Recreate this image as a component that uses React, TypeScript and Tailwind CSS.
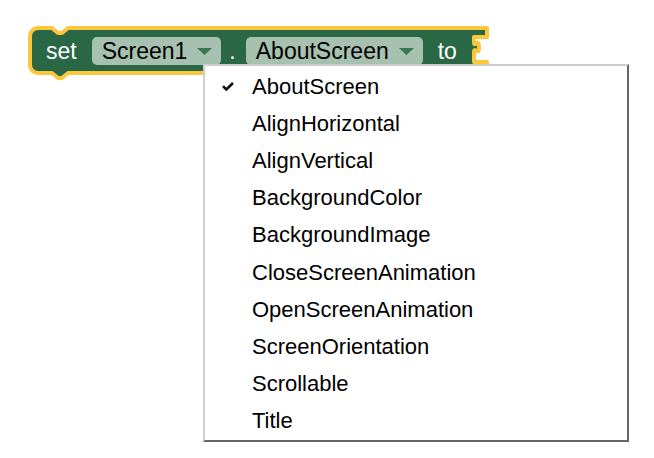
import React from 'react';

const FONT = { fontFamily: '"Liberation Sans", Arial, Helvetica, sans-serif' };

const properties = [
  'AboutScreen',
  'AlignHorizontal',
  'AlignVertical',
  'BackgroundColor',
  'BackgroundImage',
  'CloseScreenAnimation',
  'OpenScreenAnimation',
  'ScreenOrientation',
  'Scrollable',
  'Title',
];

function DropdownField({ label }: { label: string }) {
  return (
    <span className="inline-flex items-center h-[28px] rounded-[5px] bg-[#a7c1b0] pl-[10px] pr-[9px]">
      <span className="text-[23px] leading-none text-black">{label}</span>
      <svg width="15" height="7" viewBox="0 0 15 7" className="ml-[10px]">
        <path d="M0 0 H15 L7.5 7 Z" fill="#3a7552" />
      </svg>
    </span>
  );
}

// The block outline: rounded left side, statement notch top, tab bottom, empty value socket right
function BlockShape() {
  const d =
    'M2 10 A8 8 0 0 1 10 2 H24 l6 5 h4 l6 -5 H459 V11 H446 V16 ' +
    'c0 7 5 -5 5 5 s-5 -1 -5 5 V36 H459 V47 H40 l-6 5 h-4 l-6 -5 H10 A8 8 0 0 1 2 39 Z';
  return (
    <svg
      width="462"
      height="56"
      viewBox="0 0 462 56"
      className="absolute left-0 top-0 overflow-visible"
    >
      <path d={d} fill="#296745" stroke="#fcc63d" strokeWidth="4" strokeLinejoin="round" />
    </svg>
  );
}

function CheckMark() {
  return (
    <svg width="12" height="9" viewBox="0 0 12 9">
      <path d="M1 4.2 L4.3 7.5 L11 1" fill="none" stroke="#111" strokeWidth="2.6" />
    </svg>
  );
}

export default function App() {
  return (
    <div className="relative w-[654px] h-[458px] bg-white overflow-hidden" style={FONT}>
      {/* set Screen1.AboutScreen to */}
      <div className="relative ml-[28px] pt-[26px]">
        <div className="relative w-[462px] h-[56px]">
          <BlockShape />
          <div className="relative flex items-center h-[51px] pl-[18px] text-white">
            <span className="text-[23px] leading-none">set</span>
            <span className="ml-[15px]">
              <DropdownField label="Screen1" />
            </span>
            <span className="ml-[8px] text-[23px] leading-none">.</span>
            <span className="ml-[10px]">
              <DropdownField label="AboutScreen" />
            </span>
            <span className="ml-[15px] text-[23px] leading-none">to</span>
          </div>
        </div>
      </div>

      {/* Property dropdown menu */}
      <div className="absolute left-[203px] top-[64px] w-[426px] h-[378px] bg-white border-t-2 border-l-2 border-t-[#cfcfcf] border-l-[#cfcfcf] border-r-2 border-b-2 border-r-[#666] border-b-[#666] pt-[2px]">
        {properties.map((p, i) => (
          <div key={p} className="flex items-center h-[37.2px]">
            <span className="w-[47px] flex justify-end pr-[18px]">
              {i === 0 && <CheckMark />}
            </span>
            <span className="text-[22px] leading-none text-black">{p}</span>
          </div>
        ))}
      </div>
    </div>
  );
}
